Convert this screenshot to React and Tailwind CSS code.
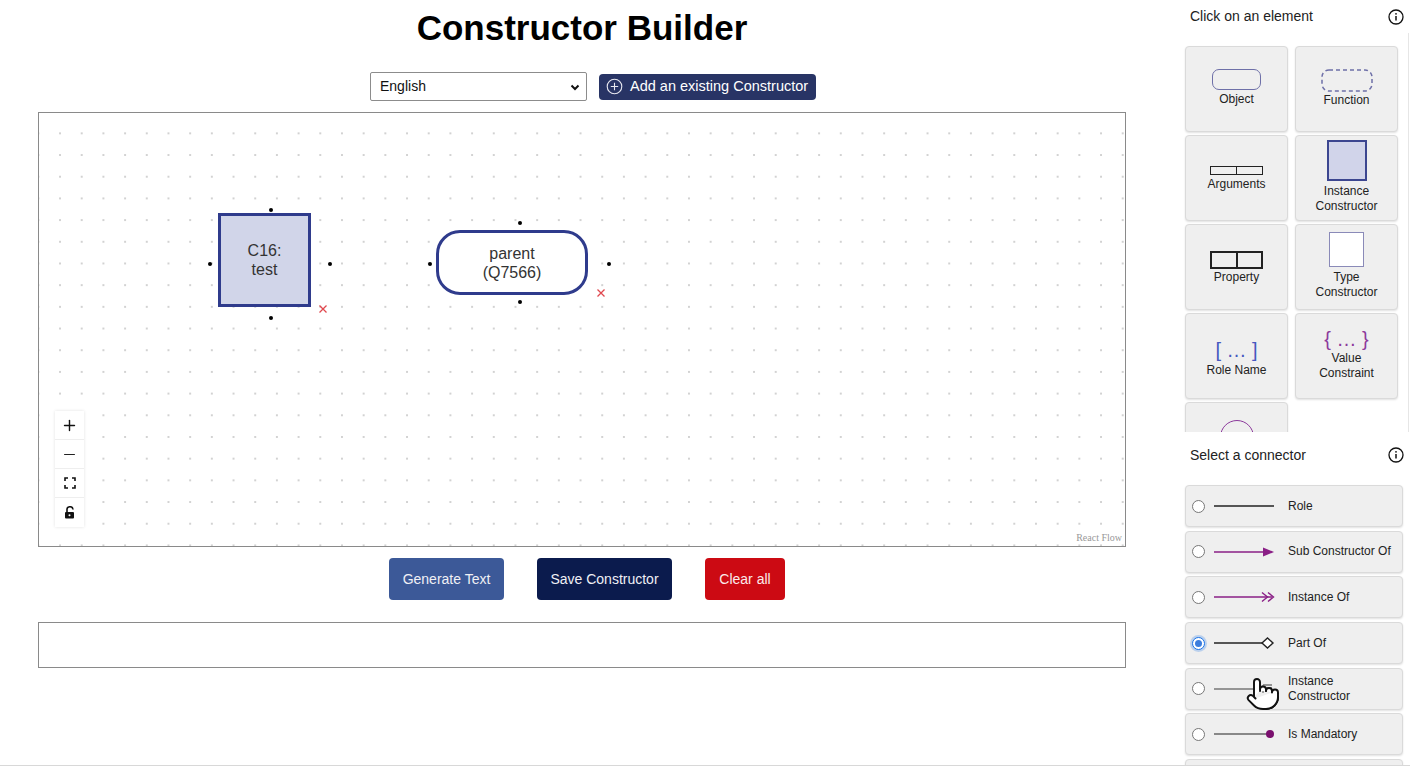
import { Plus, Minus, Pointer } from "lucide-react"

const font = { fontFamily: '"Liberation Sans", Arial, sans-serif' }

function InfoIcon() {
  return (
    <svg width="16" height="16" viewBox="0 0 16 16" fill="none">
      <circle cx="8" cy="8" r="7" stroke="#111" strokeWidth="1.3" />
      <circle cx="8" cy="4.8" r="0.9" fill="#111" />
      <path d="M8 7v4.6" stroke="#111" strokeWidth="1.5" />
    </svg>
  )
}

function Handle({ x, y }) {
  return <div className="absolute w-[4px] h-[4px] rounded-full bg-black" style={{ left: x - 2, top: y - 2 }} />
}

function Cross({ x, y }) {
  return (
    <svg className="absolute" style={{ left: x - 5, top: y - 5 }} width="10" height="10" viewBox="0 0 10 10">
      <path d="M1.5 1.5l7 7M8.5 1.5l-7 7" stroke="#e0484e" strokeWidth="1.3" />
    </svg>
  )
}

function Card({ icon, label }) {
  return (
    <div className="h-[86px] rounded-[4px] border border-[#dadada] bg-[#efefef] shadow-[0_1px_2px_rgba(0,0,0,0.12)] flex flex-col items-center justify-center text-[12px] leading-[15px] text-[#222] text-center">
      {icon}
      <div>{label}</div>
    </div>
  )
}

const cards = [
  {
    label: "Object",
    icon: <div className="w-[49px] h-[21px] rounded-[7px] border-[1.5px] border-[#6e70a8] mb-[2px] mt-[-2px]" />,
  },
  {
    label: "Function",
    icon: (
      <svg width="52" height="23" viewBox="0 0 52 23" className="mb-[1px] mt-[-2px]">
        <rect x="1" y="1" width="50" height="21" rx="7" fill="none" stroke="#6e70a8" strokeWidth="1.5" strokeDasharray="4 3" />
      </svg>
    ),
  },
  {
    label: "Arguments",
    icon: (
      <div className="flex w-[53px] h-[9px] border-[1.5px] border-[#222] mb-[2px] mt-[2px]">
        <div className="flex-1 border-r-[1.5px] border-[#222]" />
        <div className="flex-1" />
      </div>
    ),
  },
  {
    label: <>Instance<br />Constructor</>,
    icon: <div className="w-[40px] h-[41px] bg-[#d1d4ea] border-[2px] border-[#3c4690] mb-[3px] mt-[-2px]" />,
  },
  {
    label: "Property",
    icon: (
      <div className="flex w-[53px] h-[18px] border-2 border-[#222] mb-[1px] mt-[2px]">
        <div className="flex-1 border-r-2 border-[#222]" />
        <div className="flex-1" />
      </div>
    ),
  },
  {
    label: <>Type<br />Constructor</>,
    icon: <div className="w-[35px] h-[35px] bg-white border border-[#8a8ab8] mb-[3px] mt-[-2px]" />,
  },
  {
    label: "Role Name",
    icon: <div className="text-[20px] leading-[24px] text-[#4658c0] mb-[1px] mt-[4px]">[ … ]</div>,
  },
  {
    label: <>Value<br />Constraint</>,
    icon: <div className="text-[20px] leading-[22px] text-[#8c3a9c] mt-[-4px] mb-[1px]">{"{ … }"}</div>,
  },
]

function ConnIcon({ kind }) {
  const purple = "#8a1f86"
  return (
    <svg width="64" height="14" viewBox="0 0 64 14" className="shrink-0">
      {kind === "role" && <path d="M0 7h60" stroke="#222" strokeWidth="1.5" />}
      {kind === "sub" && (
        <>
          <path d="M0 7h52" stroke={purple} strokeWidth="1.5" />
          <path d="M49 2.5L60 7l-11 4.5z" fill={purple} />
        </>
      )}
      {kind === "inst" && (
        <>
          <path d="M0 7h58" stroke={purple} strokeWidth="1.5" />
          <path d="M48 2.5l5.5 4.5-5.5 4.5M54 2.5l5.5 4.5-5.5 4.5" stroke={purple} strokeWidth="1.4" fill="none" />
        </>
      )}
      {kind === "part" && (
        <>
          <path d="M0 7h48" stroke="#222" strokeWidth="1.5" />
          <path d="M48 7l5.5-5 5.5 5-5.5 5z" stroke="#222" strokeWidth="1.4" fill="white" />
        </>
      )}
      {kind === "ic" && (
        <>
          <path d="M0 7h50" stroke="#777" strokeWidth="1.5" />
          <path d="M49 3h9M49 6h9M49 3v8" stroke="#777" strokeWidth="1.3" fill="none" />
        </>
      )}
      {kind === "mand" && (
        <>
          <path d="M0 7h54" stroke="#666" strokeWidth="1.5" />
          <circle cx="56" cy="7" r="4" fill="#7a0f6e" />
        </>
      )}
    </svg>
  )
}

const connectors = [
  { kind: "role", label: "Role" },
  { kind: "sub", label: "Sub Constructor Of" },
  { kind: "inst", label: "Instance Of" },
  { kind: "part", label: "Part Of", checked: true },
  { kind: "ic", label: <>Instance<br />Constructor</> },
  { kind: "mand", label: "Is Mandatory" },
  { kind: "role", label: "" },
]

function Radio({ checked }) {
  if (checked) {
    return (
      <div className="w-[13px] h-[13px] rounded-full border-[1.5px] border-[#1a73e8] bg-white flex items-center justify-center shadow-[0_0_0_2px_rgba(26,115,232,0.25)] shrink-0">
        <div className="w-[7px] h-[7px] rounded-full bg-[#3b7ddd]" />
      </div>
    )
  }
  return <div className="w-[13px] h-[13px] rounded-full border border-[#777] bg-white shrink-0" />
}

export default function App() {
  return (
    <div className="flex h-[766px] w-[1410px] overflow-hidden bg-white border-b border-[#d8d8d8]" style={font}>
      {/* main column */}
      <div className="w-[1165px] shrink-0 pl-[38px] pr-[39px] flex flex-col">
        <h1 className="text-[35px] leading-[40px] font-bold text-black text-center pt-[8px]">Constructor Builder</h1>

        <div className="flex justify-center items-center gap-[12px] mt-[24px] pl-[22px]">
          <div className="w-[217px] h-[29px] border border-[#8c8c8c] rounded-[2px] flex items-center justify-between pl-[9px] pr-[5px] text-[14px] text-[#111]">
            <span>English</span>
            <svg width="12" height="12" viewBox="0 0 12 12">
              <path d="M2.5 4.5L6 8l3.5-3.5" stroke="#111" strokeWidth="2" fill="none" />
            </svg>
          </div>
          <button className="h-[26px] w-[217px] rounded-[4px] bg-[#283465] text-white text-[14.5px] flex items-center gap-[7px] pl-[7px]">
            <svg width="17" height="17" viewBox="0 0 17 17" fill="none">
              <circle cx="8.5" cy="8.5" r="7.3" stroke="#e8e8f0" strokeWidth="1.1" />
              <path d="M8.5 4.8v7.4M4.8 8.5h7.4" stroke="#e8e8f0" strokeWidth="1.1" />
            </svg>
            Add an existing Constructor
          </button>
        </div>

        {/* canvas */}
        <div className="relative mt-[11px] h-[435px] border border-[#8a8a8a] bg-white bg-[radial-gradient(circle,#d2d2d2_0.7px,transparent_1.1px)] bg-[length:21.7px_21.7px] bg-[position:10.2px_9.5px]">
          <div className="absolute left-[179px] top-[100px] w-[93px] h-[94px] bg-[#d1d5e9] border-[3px] border-[#2f3b8c] flex items-center justify-center text-center text-[16px] leading-[19px] text-[#333]">
            C16:<br />test
          </div>
          <Handle x={232} y={97} />
          <Handle x={171} y={151} />
          <Handle x={291} y={151} />
          <Handle x={232} y={205} />
          <Cross x={284} y={196} />

          <div className="absolute left-[397px] top-[117px] w-[152px] h-[65px] bg-white border-[3px] border-[#2f3b8c] rounded-[24px] flex items-center justify-center text-center text-[16px] leading-[19px] text-[#333]">
            parent<br />(Q7566)
          </div>
          <Handle x={481} y={110} />
          <Handle x={391} y={151} />
          <Handle x={570} y={151} />
          <Handle x={481} y={189} />
          <Cross x={562} y={180} />

          <div className="absolute left-[16px] top-[298px] w-[29px] bg-white shadow-[0_0_3px_rgba(0,0,0,0.12)] flex flex-col">
            <div className="h-[29px] flex items-center justify-center border-b border-[#eee]">
              <Plus size={17} strokeWidth={2} color="#111" />
            </div>
            <div className="h-[29px] flex items-center justify-center border-b border-[#eee]">
              <Minus size={17} strokeWidth={1.6} color="#222" />
            </div>
            <div className="h-[29px] flex items-center justify-center border-b border-[#eee]">
              <svg width="12" height="12" viewBox="0 0 12 12" fill="none" stroke="#111" strokeWidth="1.6">
                <path d="M1 4V1h3M8 1h3v3M11 8v3H8M4 11H1V8" />
              </svg>
            </div>
            <div className="h-[29px] flex items-center justify-center">
              <svg width="11" height="13" viewBox="0 0 11 13">
                <path d="M3 6V4a3 3 0 016-0.5" stroke="#111" strokeWidth="1.6" fill="none" />
                <rect x="1" y="6" width="9" height="6.5" rx="1" fill="#111" />
                <circle cx="5.5" cy="9.2" r="1" fill="white" />
              </svg>
            </div>
          </div>

          <div className="absolute right-[3px] bottom-[1px] text-[10px] text-[#999]" style={{ fontFamily: '"Liberation Serif", serif' }}>
            React Flow
          </div>
        </div>

        <div className="flex justify-center gap-[33px] mt-[11px] pl-[10px]">
          <button className="h-[42px] w-[115px] rounded-[4px] bg-[#3c5998] text-[#f0f0f5] text-[14px]">Generate Text</button>
          <button className="h-[42px] w-[135px] rounded-[4px] bg-[#0b1b4d] text-[#f0f0f5] text-[14px]">Save Constructor</button>
          <button className="h-[42px] w-[80px] rounded-[4px] bg-[#cc0a13] text-[#fbeaea] text-[14px]">Clear all</button>
        </div>

        <div className="mt-[22px] h-[46px] border border-[#8a8a8a] bg-white" />
      </div>

      {/* sidebar */}
      <div className="relative flex-1 flex flex-col">
        <div className="shrink-0 flex items-center justify-between h-[33px] pl-[25px] pr-[6px] text-[14px] text-[#222]">
          <span>Click on an element</span>
          <InfoIcon />
        </div>
        <div className="shrink-0 h-[399px] overflow-hidden border-r border-[#e6e6e6] mr-[1px] pt-[13px] pl-[20px]">
          <div className="grid grid-cols-[103px_103px] gap-x-[7px] gap-y-[3px]">
            {cards.map((c, i) => (
              <Card key={i} icon={c.icon} label={c.label} />
            ))}
            <div className="h-[86px] rounded-[4px] border border-[#dadada] bg-[#efefef] shadow-[0_1px_2px_rgba(0,0,0,0.12)] flex justify-center pt-[17px]">
              <div className="w-[34px] h-[34px] rounded-full border-[1.5px] border-[#8c3a9c]" />
            </div>
          </div>
        </div>

        <div className="shrink-0 flex items-center justify-between h-[46px] pl-[25px] pr-[6px] text-[14px] text-[#222]">
          <span>Select a connector</span>
          <InfoIcon />
        </div>
        <div className="shrink-0 flex flex-col gap-[3.7px] pl-[20px] pr-[7px] mt-[7px]">
          {connectors.map((c, i) => (
            <div
              key={i}
              className="h-[42px] shrink-0 rounded-[4px] border border-[#dadada] bg-[#efefef] shadow-[0_1px_2px_rgba(0,0,0,0.12)] flex items-center pl-[6px] text-[12px] leading-[15px] text-[#222]"
            >
              <Radio checked={c.checked} />
              <div className="ml-[9px]">
                <ConnIcon kind={c.kind} />
              </div>
              <div className="ml-[10px] whitespace-nowrap">{c.label}</div>
            </div>
          ))}
        </div>

        <div className="absolute left-[80px] top-[676px]">
          <Pointer size={36} fill="white" color="#111" strokeWidth={1.3} />
        </div>
      </div>
    </div>
  )
}
